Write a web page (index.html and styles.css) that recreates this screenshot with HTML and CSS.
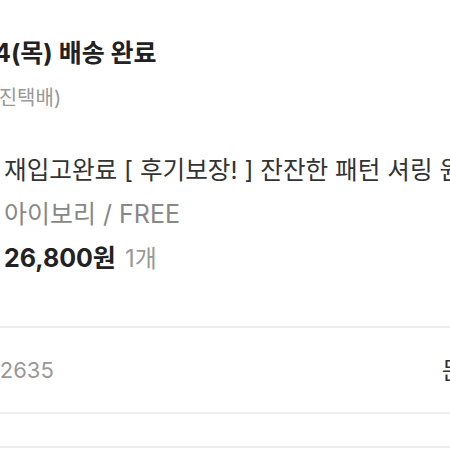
FILE: index.html
```html
<!DOCTYPE html>
<html lang="ko">
<head>
  <meta charset="UTF-8">
  <title>주문 상세</title>
  <link rel="stylesheet" href="styles.css">
</head>
<body>
  <div class="screen">

    <!-- 배송 상태 -->
    <section class="status">
      <h2 class="status-title">12/14(목) 배송 완료</h2>
      <p class="carrier">(한진택배)</p>
    </section>

    <!-- 주문 상품 -->
    <section class="item">
      <div class="thumb"></div>
      <div class="info">
        <p class="name">재입고완료 [ 후기보장! ] 잔잔한 패턴 셔링 원피스</p>
        <p class="option">아이보리 / FREE</p>
        <p class="price"><strong>26,800원</strong><span class="qty">1개</span></p>
      </div>
    </section>

    <!-- 주문번호 -->
    <section class="order-row">
      <span class="order-no">주문번호 20231214002635</span>
      <span class="order-link">문의</span>
    </section>

    <div class="spacer"></div>
  </div>
</body>
</html>
```

FILE: styles.css
```css
html, body {
  margin: 0;
  background: #fff;
  overflow: hidden;
}
body {
  font-family: Inter, "Noto Sans CJK KR", sans-serif;
  color: #222;
}
.screen {
  margin-left: -80px;
  width: 600px;
  padding-top: 37px;
}
.status {
  padding-left: 27px;
}
.status-title {
  margin: 0;
  font-size: 25px;
  line-height: 32px;
  font-weight: 700;
}
.carrier {
  margin: 16px 0 0 26px;
  font-size: 20px;
  line-height: 26px;
  color: #999;
}
.item {
  display: flex;
  gap: 12px;
  padding-left: 20px;
  margin-top: 37px;
}
.thumb {
  width: 52px;
  flex: none;
}
.info p {
  margin: 0;
  white-space: nowrap;
  line-height: 44px;
}
.name {
  font-size: 24.6px;
  color: #333;
}
.option {
  font-size: 25px;
  color: #888;
}
.price strong {
  font-size: 25px;
  font-weight: 700;
  color: #222;
}
.qty {
  margin-left: 9px;
  font-size: 24px;
  color: #999;
}
.order-row {
  display: flex;
  justify-content: space-between;
  align-items: center;
  width: 566px;
  height: 80px;
  padding-bottom: 4px;
  margin-top: 43px;
  border-top: 2px solid #eee;
  border-bottom: 2px solid #eee;
}
.order-no {
  margin-left: -135px;
  font-size: 22px;
  color: #999;
}
.order-link {
  font-size: 24px;
  color: #333;
}
.spacer {
  height: 32px;
  border-bottom: 2px solid #eee;
}
```
